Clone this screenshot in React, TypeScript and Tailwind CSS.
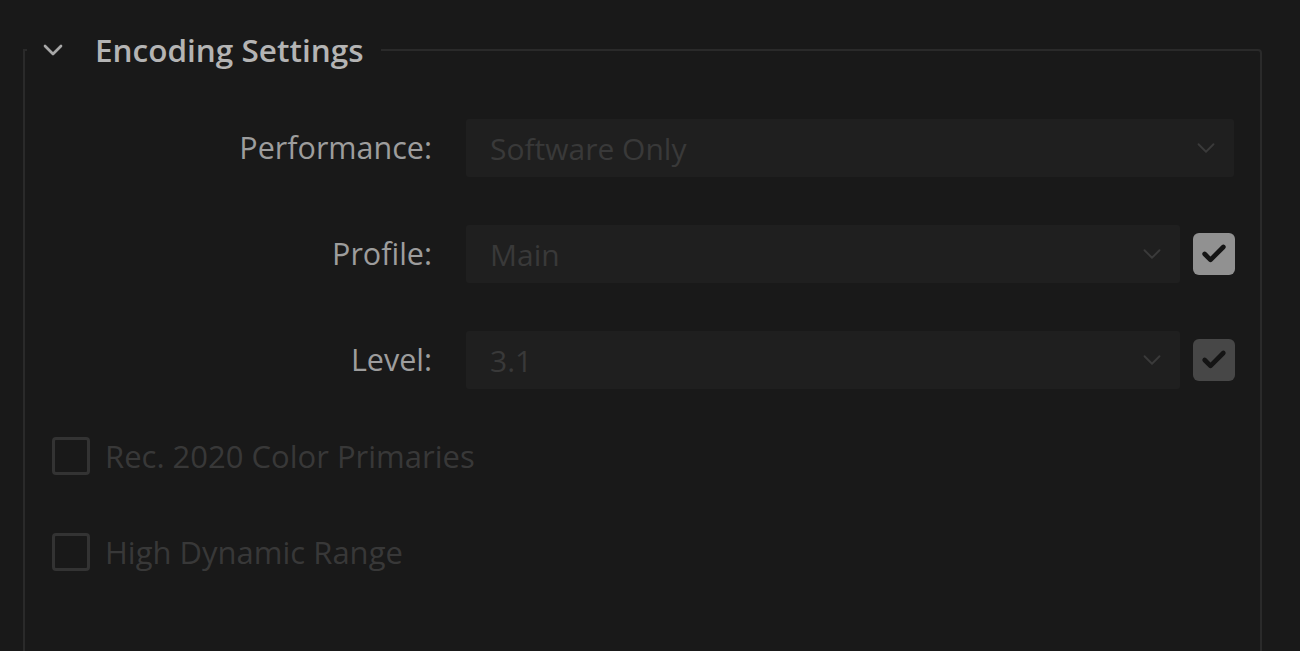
import { ChevronDown, Check } from "lucide-react";

const font = { fontFamily: '"Open Sans", "Noto Sans", sans-serif' };

function Select({ value, wide }: { value: string; wide?: boolean }) {
  return (
    <div
      className={`flex h-[58px] items-center justify-between rounded-[3px] bg-[#1f1f1f] pl-[24px] pr-[13px] ${
        wide ? "w-[768px]" : "w-[714px]"
      }`}
    >
      <span className="text-[30px] text-[#393939]">{value}</span>
      <ChevronDown className="h-[30px] w-[30px] text-[#3a3a3a]" strokeWidth={1.5} />
    </div>
  );
}

function Row({ label, children }: { label: string; children: React.ReactNode }) {
  return (
    <div className="flex items-center">
      <div className="w-[407px] text-right text-[30.5px] text-[#9d9d9d]">{label}</div>
      <div className="ml-[34px] flex items-center gap-[13px]">{children}</div>
    </div>
  );
}

function Box({ on, dim }: { on?: boolean; dim?: boolean }) {
  if (on) {
    return (
      <div
        className={`flex h-[42px] w-[42px] items-center justify-center rounded-[6px] ${
          dim ? "bg-[#474747]" : "bg-[#919191]"
        }`}
      >
        <Check className="h-[28px] w-[28px] text-[#141414]" strokeWidth={4} />
      </div>
    );
  }
  return <div className="h-[38px] w-[38px] rounded-[4px] border-[3px] border-[#333333]" />;
}

export default function App() {
  return (
    <div className="h-[651px] w-[1300px] overflow-hidden bg-[#191919] pl-[23px] pr-[38px]" style={font}>
      <fieldset className="mt-[26px] h-[700px] rounded-tr-[4px] border-2 border-[#2a2a2a]">
        <legend className="ml-[2px] flex items-center pl-[10px] pr-[18px]">
          <ChevronDown className="h-[32px] w-[32px] text-[#a8a8a8]" strokeWidth={2} />
          <span className="ml-[26px] text-[31.5px] font-semibold text-[#b4b4b4]">Encoding Settings</span>
        </legend>
        <div className="flex flex-col gap-[48px] pt-[46px]">
          <Row label="Performance:">
            <Select value="Software Only" wide />
          </Row>
          <Row label="Profile:">
            <Select value="Main" />
            <Box on />
          </Row>
          <Row label="Level:">
            <Select value="3.1" />
            <Box on dim />
          </Row>
        </div>
        <div className="mt-[47px] flex flex-col gap-[56px] pl-[27px]">
          <label className="flex h-[40px] items-center gap-[15px]">
            <Box />
            <span className="text-[31px] leading-[40px] text-[#383838]">Rec. 2020 Color Primaries</span>
          </label>
          <label className="flex h-[40px] items-center gap-[15px]">
            <Box />
            <span className="text-[31px] leading-[40px] text-[#383838]">High Dynamic Range</span>
          </label>
        </div>
      </fieldset>
    </div>
  );
}
